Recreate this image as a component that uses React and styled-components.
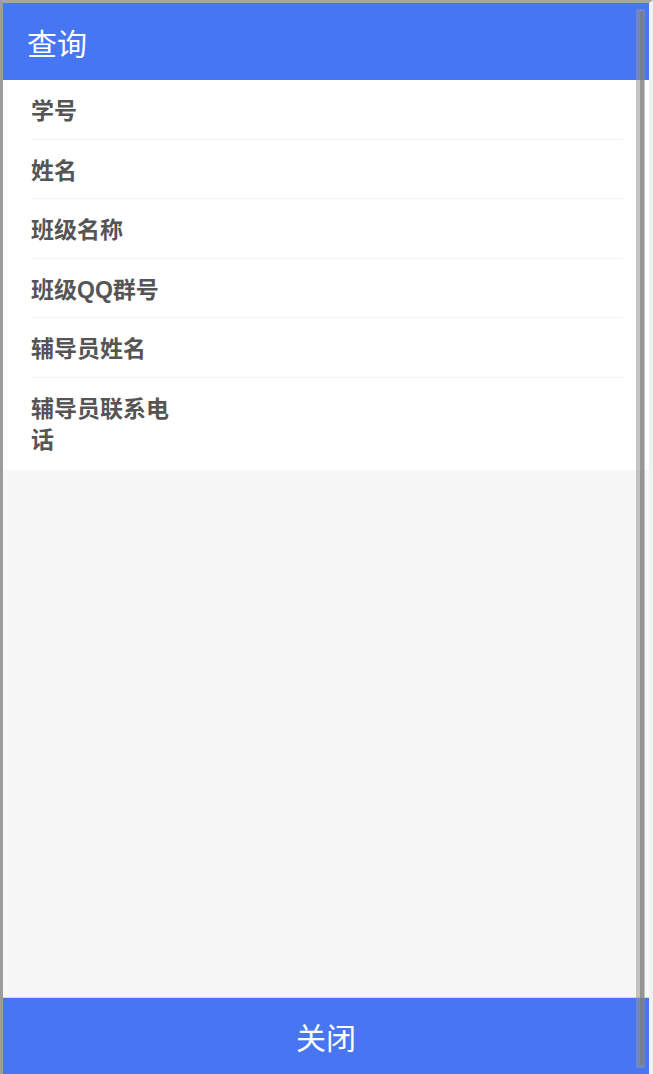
import React from "react";
import styled, { createGlobalStyle } from "styled-components";

const Global = createGlobalStyle`
  html, body {
    margin: 0;
    padding: 0;
    background: #a3a3a3;
    font-family: "Liberation Sans", "Noto Sans CJK SC", sans-serif;
  }
  * { box-sizing: border-box; }
`;

const Frame = styled.div`
  height: 1074px;
  border-top: 3px solid #a6a6a6;
  border-left: 3px solid #9c9c9c;
  border-right: 4px solid #f1f1f1;
  position: relative;
`;

const Screen = styled.div`
  height: 100%;
  display: flex;
  flex-direction: column;
  background: #f7f7f7;
`;

const Header = styled.header`
  height: 77px;
  flex: none;
  background: #4776f2;
  display: flex;
  align-items: center;
  padding-left: 24px;
  color: #fff;
  font-size: 30px;
`;

const List = styled.div`
  background: #fff;
  padding: 0 26px 2px 28px;
`;

const Row = styled.div`
  display: flex;
  padding: 16px 0 11.5px;
  border-bottom: 1px solid ${(p) => (p.$last ? "transparent" : "#f3f3f3")};
`;

const Label = styled.div`
  width: 150px;
  font-size: 23px;
  line-height: 31px;
  font-weight: bold;
  color: #555;
`;

const Spacer = styled.div`
  flex: 1;
`;

const Footer = styled.footer`
  height: 77px;
  flex: none;
  background: #4876f3;
  border-top: 1px solid #d8d8d8;
  display: flex;
  align-items: center;
  justify-content: center;
  color: #fff;
  font-size: 30px;
`;

const Scrollbar = styled.div`
  position: absolute;
  top: 6px;
  bottom: 6px;
  right: 4px;
  width: 9px;
  background: rgba(150, 150, 150, 0.55);
  border-radius: 2px;

  &::after {
    content: "";
    position: absolute;
    top: 3px;
    bottom: 3px;
    left: 4px;
    width: 4px;
    background: rgba(120, 120, 120, 0.6);
  }
`;

const fields = ["学号", "姓名", "班级名称", "班级QQ群号", "辅导员姓名", "辅导员联系电话"];

export default function App() {
  return (
    <>
      <Global />
      <Frame>
        <Screen>
          <Header>查询</Header>
          <List>
            {fields.map((f, i) => (
              <Row key={f} $last={i === fields.length - 1}>
                <Label>{f}</Label>
              </Row>
            ))}
          </List>
          <Spacer />
          <Footer>关闭</Footer>
        </Screen>
        <Scrollbar />
      </Frame>
    </>
  );
}
